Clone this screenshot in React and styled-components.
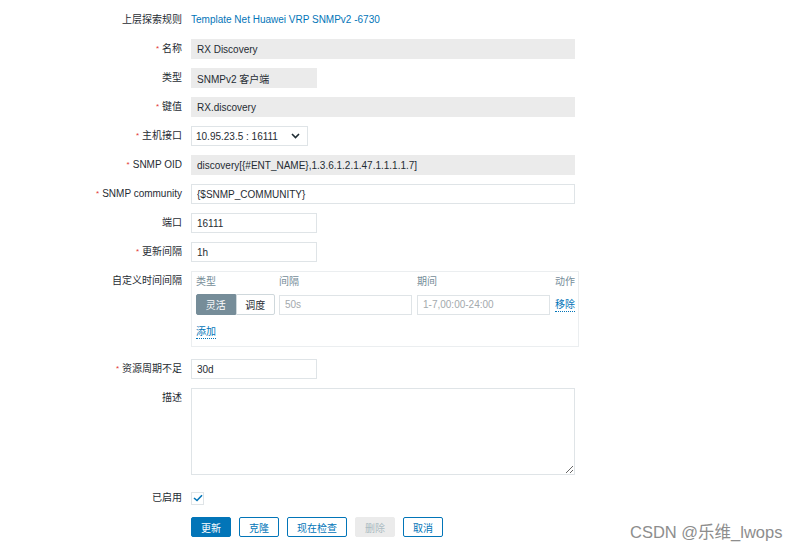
import React from 'react'
import styled, { createGlobalStyle } from 'styled-components'

const Global = createGlobalStyle`
  html, body {
    margin: 0;
    padding: 0;
    background: #fff;
  }
  body {
    font-family: "Liberation Sans", Arial, "Noto Sans CJK SC", sans-serif;
    font-size: 10px;
    color: #1f2c33;
  }
  * { box-sizing: border-box; }
`

const rows = [
  { label: '名称', req: true, value: 'RX Discovery', ro: true, w: 384 },
  { label: '类型', value: 'SNMPv2 客户端', ro: true, w: 126 },
  { label: '键值', req: true, value: 'RX.discovery', ro: true, w: 384 },
]

const rows2 = [
  { label: 'SNMP OID', req: true, value: 'discovery[{#ENT_NAME},1.3.6.1.2.1.47.1.1.1.1.7]', ro: true, w: 384 },
  { label: 'SNMP community', req: true, value: '{$SNMP_COMMUNITY}', w: 384 },
  { label: '端口', value: '16111', w: 126 },
  { label: '更新间隔', req: true, value: '1h', w: 126 },
]

const Label = ({ req, children, ...rest }) => (
  <Lbl {...rest}>
    {req && <Star>*</Star>}
    {children}
  </Lbl>
)

const App = () => {
  return (
    <>
      <Global />
      <Page>
        <Form>
          <Label>上层探索规则</Label>
          <Cell>
            <TopLink href="#">Template Net Huawei VRP SNMPv2 -6730</TopLink>
          </Cell>

          {rows.map((r) => (
            <React.Fragment key={r.label}>
              <Label req={r.req}>{r.label}</Label>
              <Cell>
                <Input $ro={r.ro} $w={r.w} readOnly defaultValue={r.value} />
              </Cell>
            </React.Fragment>
          ))}

          <Label req>主机接口</Label>
          <Cell>
            <Select>
              <span>10.95.23.5 : 16111</span>
              <svg width="9" height="6" viewBox="0 0 9 6">
                <path d="M1 1 L4.5 4.5 L8 1" fill="none" stroke="#1f2c33" strokeWidth="1.6" />
              </svg>
            </Select>
          </Cell>

          {rows2.map((r) => (
            <React.Fragment key={r.label}>
              <Label req={r.req}>{r.label}</Label>
              <Cell>
                <Input $ro={r.ro} $w={r.w} readOnly defaultValue={r.value} />
              </Cell>
            </React.Fragment>
          ))}

          <Label>自定义时间间隔</Label>
          <Cell>
            <IntervalBox>
              <Head>类型</Head>
              <Head>间隔</Head>
              <Head>期间</Head>
              <Head>动作</Head>
              <Segment>
                <SegBtn $on>灵活</SegBtn>
                <SegBtn>调度</SegBtn>
              </Segment>
              <Input $w={133} placeholder="50s" />
              <Input $w={133} placeholder="1-7,00:00-24:00" />
              <DotLink href="#">移除</DotLink>
              <AddRow>
                <DotLink href="#">添加</DotLink>
              </AddRow>
            </IntervalBox>
          </Cell>

          <Label req>资源周期不足</Label>
          <Cell>
            <Input $w={126} readOnly defaultValue="30d" />
          </Cell>

          <Label>描述</Label>
          <Cell>
            <TextArea />
          </Cell>

          <Label $check>已启用</Label>
          <Cell $check>
            <Check>
              <svg width="10" height="8" viewBox="0 0 10 8">
                <path d="M1 4 L4 6.5 L9 1.2" fill="none" stroke="#0275b8" strokeWidth="1.6" />
              </svg>
            </Check>
          </Cell>

          <span />
          <Buttons>
            <Btn $primary>更新</Btn>
            <Btn>克隆</Btn>
            <Btn>现在检查</Btn>
            <Btn disabled>删除</Btn>
            <Btn>取消</Btn>
          </Buttons>
        </Form>
        <Watermark>CSDN @乐维_lwops</Watermark>
      </Page>
    </>
  )
}

export default App

const Page = styled.div`
  position: relative;
  width: 800px;
  height: 548px;
  overflow: hidden;
`
const Form = styled.div`
  display: grid;
  grid-template-columns: 182px 388px;
  column-gap: 9px;
  row-gap: 9px;
  padding-top: 10px;
  align-items: start;
`
const Lbl = styled.div`
  text-align: right;
  height: 20px;
  line-height: 20px;
  font-size: 10px;
  white-space: nowrap;
  margin-top: ${(p) => (p.$check ? '4px' : '0')};
`
const Star = styled.span`
  color: #e33734;
  font-size: 8px;
  line-height: 0;
  margin-right: 3px;
  vertical-align: 1px;
`
const Cell = styled.div`
  display: flex;
  align-items: center;
  min-height: 20px;
  margin-top: ${(p) => (p.$check ? '4px' : '0')};
`
const TopLink = styled.a`
  color: #0275b8;
  text-decoration: none;
  line-height: 20px;
`
const Input = styled.input`
  width: ${(p) => p.$w}px;
  height: 20px;
  padding: 0 5px;
  font-family: inherit;
  font-size: 10px;
  color: #1f2c33;
  background: ${(p) => (p.$ro ? '#ebebeb' : '#fff')};
  border: 1px solid ${(p) => (p.$ro ? '#ebebeb' : '#dfe4e7')};
  border-radius: 0;
  outline: none;
  &::placeholder {
    color: #a3a9ad;
  }
`
const Select = styled.div`
  width: 117px;
  height: 20px;
  border: 1px solid #dfe4e7;
  display: flex;
  align-items: center;
  justify-content: space-between;
  padding: 0 7px 0 4px;
  font-size: 10px;
`
const IntervalBox = styled.div`
  width: 388px;
  margin-bottom: 3px;
  border: 1px solid #ebeef0;
  padding: 3px 3px 4px 4px;
  display: grid;
  grid-template-columns: 78px 133px 133px 20px;
  column-gap: 5px;
  row-gap: 5px;
  align-items: center;
`
const Head = styled.div`
  color: #768d99;
  line-height: 14px;
  font-size: 10px;
  white-space: nowrap;
  &:nth-child(4) {
    text-align: right;
  }
`
const Segment = styled.div`
  display: flex;
  height: 21px;
  width: 79px;
`
const SegBtn = styled.div`
  flex: 1;
  display: flex;
  align-items: center;
  justify-content: center;
  font-size: 10px;
  background: ${(p) => (p.$on ? '#768d99' : '#fff')};
  color: ${(p) => (p.$on ? '#fff' : '#1f2c33')};
  border: 1px solid ${(p) => (p.$on ? '#768d99' : '#cfd8dc')};
  border-radius: ${(p) => (p.$on ? '2px 0 0 2px' : '0 2px 2px 0')};
`
const DotLink = styled.a`
  color: #0275b8;
  text-decoration: none;
  border-bottom: 1px dotted #0275b8;
  line-height: 13px;
  white-space: nowrap;
  justify-self: end;
  font-size: 10px;
`
const AddRow = styled.div`
  grid-column: 1 / -1;
  height: 20px;
  display: flex;
  align-items: center;
  margin-top: 2px;
`
const TextArea = styled.textarea`
  width: 384px;
  height: 87px;
  border: 1px solid #dfe4e7;
  border-radius: 0;
  outline: none;
  font-family: inherit;
  font-size: 10px;
  display: block;
`
const Check = styled.div`
  width: 13px;
  height: 13px;
  border: 1px solid #dfe4e7;
  display: flex;
  align-items: center;
  justify-content: center;
`
const Buttons = styled.div`
  display: flex;
  gap: 8px;
`
const Btn = styled.button`
  height: 20px;
  padding: 0 9px;
  font-family: inherit;
  font-size: 10px;
  border-radius: 2px;
  background: ${(p) => (p.$primary ? '#0275b8' : '#fff')};
  color: ${(p) => (p.$primary ? '#fff' : '#0275b8')};
  border: 1px solid #0275b8;
  cursor: pointer;
  &:disabled {
    background: #ebebeb;
    border-color: #ebebeb;
    color: #acbbc2;
    cursor: default;
  }
`
const Watermark = styled.div`
  position: absolute;
  left: 630px;
  top: 519px;
  font-size: 16.5px;
  color: #8d8d8d;
  font-family: "Liberation Sans", Arial, "Noto Sans CJK SC", sans-serif;
  white-space: nowrap;
`
